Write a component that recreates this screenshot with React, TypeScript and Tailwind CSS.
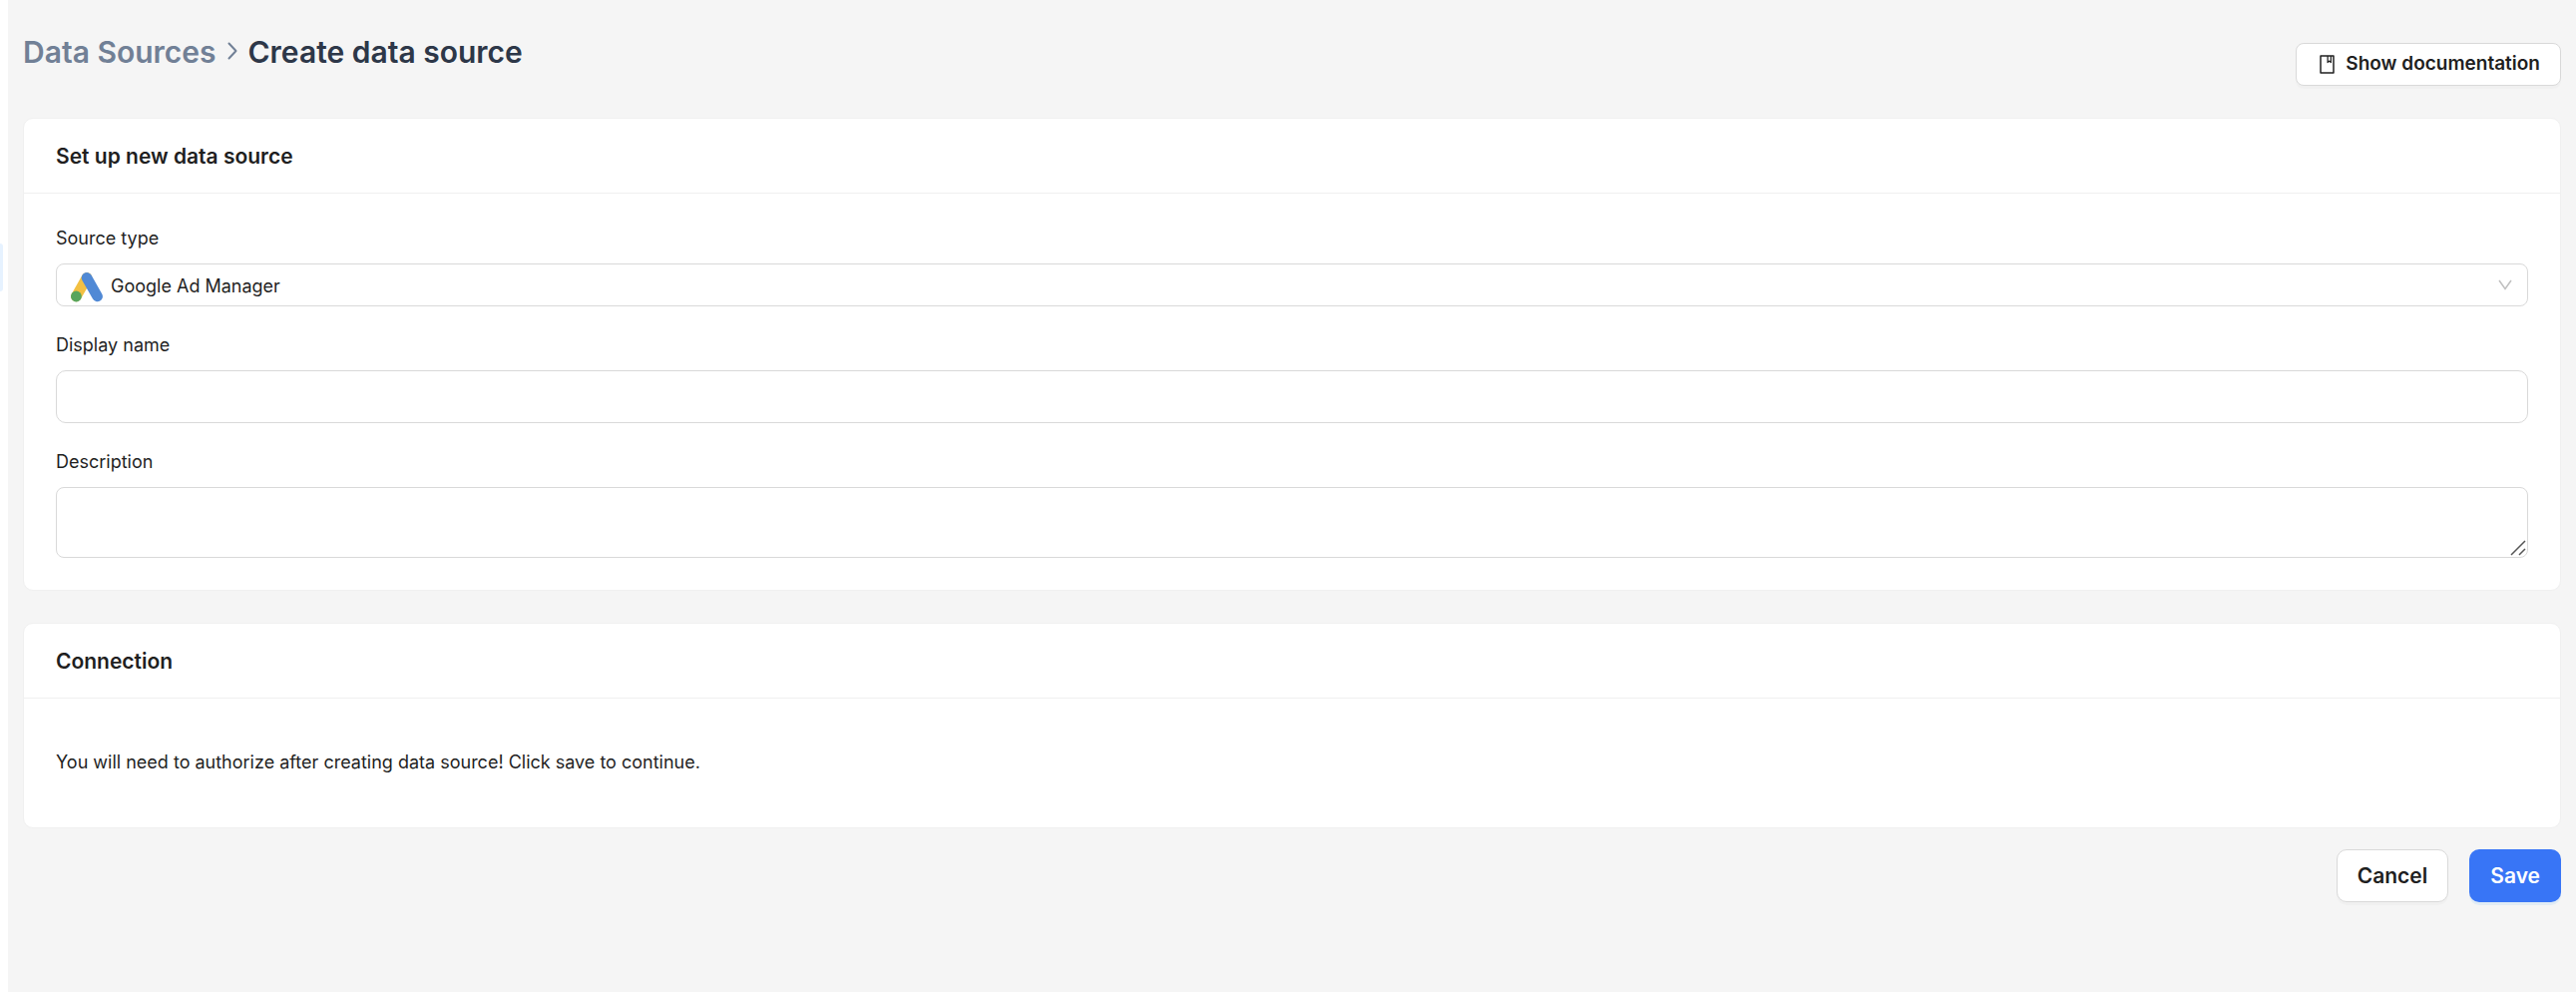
import type { ReactNode } from "react";

function Card({ title, children }: { title: string; children: ReactNode }) {
  return (
    <section className="rounded-[10px] border border-[#f0f0f0] bg-white">
      <h2 className="border-b border-[#f0f0f0] px-8 pt-[23px] pb-[21px] text-[21px] leading-[30px] font-semibold">
        {title}
      </h2>
      {children}
    </section>
  );
}

function Label({ htmlFor, children }: { htmlFor: string; children: ReactNode }) {
  return (
    <label htmlFor={htmlFor} className="mb-[11px] block leading-7">
      {children}
    </label>
  );
}

function AdsLogo() {
  return (
    <svg width="32" height="30" viewBox="0 0 32 30" aria-hidden="true">
      <path d="M16 5.4 5.4 24" stroke="#f2c042" strokeWidth="10.6" strokeLinecap="round" />
      <path d="M16 5.4 26.6 24" stroke="#5089d5" strokeWidth="10.6" strokeLinecap="round" />
      <circle cx="5.4" cy="24" r="5.4" fill="#58a55c" />
    </svg>
  );
}

function BookIcon() {
  return (
    <svg width="21" height="21" viewBox="0 0 1024 1024" fill="currentColor" aria-hidden="true">
      <path d="M832 64H192c-17.700 0-32 14.300-32 32v832c0 17.700 14.300 32 32 32h640c17.700 0 32-14.300 32-32V96c0-17.700-14.300-32-32-32zm-260 72h96v209.900L621.500 312 572 347.400V136zm220 752H232V136h280v296.900c0 3.300 1 6.600 3 9.300a15.900 15.900 0 0 0 22.300 3.700l83.800-59.900 81.400 59.400c2.700 2 6 3.100 9.400 3.100 8.800 0 16-7.200 16-16V136h64v752z" />
    </svg>
  );
}

export default function App() {
  return (
    <div className="flex min-h-screen bg-[#f5f5f5] font-[Inter,'Liberation_Sans',sans-serif] text-[18px] text-[#1f1f1f]">
      <aside className="w-2 shrink-0 bg-white pt-[244px]">
        <div className="h-12 w-[3px] rounded-r-lg bg-[#e6f2ff]" />
      </aside>
      <main className="min-w-0 flex-1 px-[15px]">
        <header className="flex h-[118px] items-start justify-between">
          <h1 className="flex items-center pt-8 text-[30px] leading-10 font-semibold text-[#2d3748]">
            <a href="#sources" className="text-[#718096]">Data Sources</a>
            <svg width="10" height="18" viewBox="0 0 10 18" fill="none" stroke="#718096" strokeWidth="2" strokeLinecap="round" strokeLinejoin="round" className="mx-[11px] mb-0.5" aria-hidden="true">
              <path d="m1.500 1.500 7 7.500-7 7.500" />
            </svg>
            <span>Create data source</span>
          </h1>
          <button type="button" className="mt-[43px] flex h-[43px] items-center gap-2 rounded-lg border border-[#d9d9d9] bg-white px-5 text-[19px] font-semibold shadow-[0_3px_0_rgba(0,0,0,0.02)]">
            <BookIcon />
            Show documentation
          </button>
        </header>

        <form>
          <Card title="Set up new data source">
            <div className="flex flex-col gap-[25px] px-8 pt-[31px] pb-8">
              <div>
                <Label htmlFor="source-type">Source type</Label>
                <div className="relative flex h-[43px] items-center rounded-lg border border-[#d9d9d9]">
                  <div className="pointer-events-none absolute top-2 left-[14px]">
                    <AdsLogo />
                  </div>
                  <select id="source-type" className="h-full w-full appearance-none rounded-lg bg-transparent pt-0.5 pr-12 pl-[54px] outline-none">
                    <option>Google Ad Manager</option>
                  </select>
                  <svg width="14" height="11" viewBox="0 0 14 11" fill="none" stroke="#bfbfbf" strokeWidth="1.500" className="pointer-events-none absolute right-[15px]" aria-hidden="true">
                    <path d="m1 1 6 8.500L13 1" />
                  </svg>
                </div>
              </div>
              <div>
                <Label htmlFor="display-name">Display name</Label>
                <input id="display-name" type="text" className="block h-[53px] w-full rounded-[10px] border border-[#d9d9d9] px-4 outline-none" />
              </div>
              <div>
                <Label htmlFor="description">Description</Label>
                <div className="relative">
                  <textarea id="description" className="block h-[71px] w-full resize-none rounded-lg border border-[#d9d9d9] px-4 py-2 outline-none" />
                  <svg width="16" height="16" viewBox="0 0 16 16" stroke="#555" strokeWidth="1.500" className="pointer-events-none absolute right-0.5 bottom-0.5" aria-hidden="true">
                    <path d="M1 15 15 1M9 15l6-6" />
                  </svg>
                </div>
              </div>
            </div>
          </Card>

          <div className="mt-8">
            <Card title="Connection">
              <p className="px-8 pt-[50px] pb-[51px] leading-7">
                You will need to authorize after creating data source! Click save to continue.
              </p>
            </Card>
          </div>

          <div className="mt-[21px] flex justify-end gap-[21px] text-[21px] font-semibold">
            <button type="button" className="h-[53px] rounded-[10px] border border-[#d9d9d9] bg-white px-5 shadow-[0_3px_0_rgba(0,0,0,0.02)]">
              Cancel
            </button>
            <button type="submit" className="h-[53px] rounded-[10px] bg-[#3875f6] px-[21px] text-white shadow-[0_3px_0_rgba(5,145,255,0.08)]">
              Save
            </button>
          </div>
        </form>
      </main>
    </div>
  );
}
